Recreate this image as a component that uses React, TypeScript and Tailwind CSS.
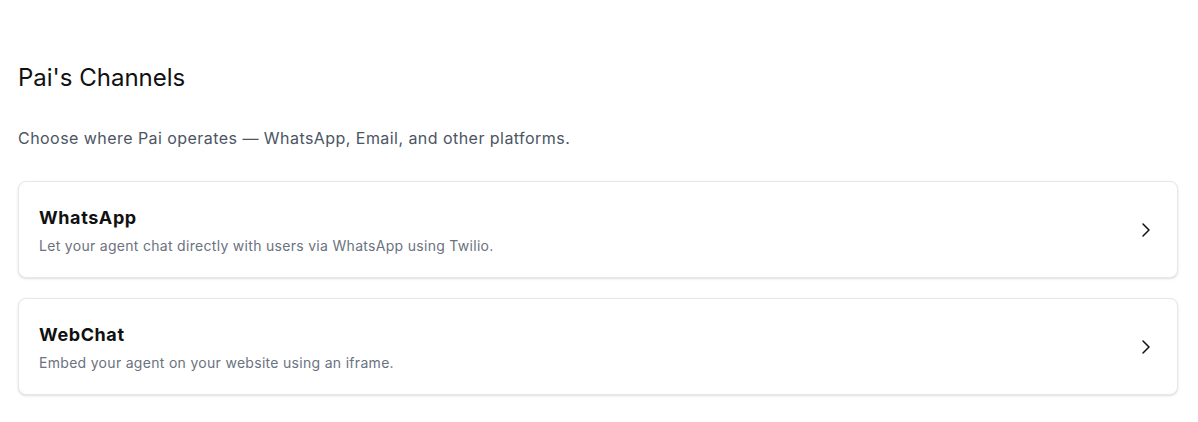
import { ChevronRight } from 'lucide-react';

const channels = [
  {
    name: 'WhatsApp',
    description: 'Let your agent chat directly with users via WhatsApp using Twilio.',
  },
  {
    name: 'WebChat',
    description: 'Embed your agent on your website using an iframe.',
  },
];

const App = () => {
  return (
    <main className="min-h-screen bg-white font-['Inter',sans-serif] pl-[18px] pr-[20px] pt-[62px]">
      <h1 className="text-2xl leading-8 text-[#111111]">Pai&apos;s Channels</h1>
      <p className="mt-8 text-base leading-6 tracking-[0.45px] text-[#4b5563]">
        Choose where Pai operates — WhatsApp, Email, and other platforms.
      </p>
      <div className="mt-[31px] flex flex-col gap-5">
        {channels.map(({ name, description }) => (
          <div
            key={name}
            className="flex items-center justify-between rounded-lg border border-gray-200 bg-white px-5 pt-[22px] pb-[21px] shadow-sm"
          >
            <div>
              <h3 className="text-lg leading-7 font-bold tracking-[0.6px] text-[#111111]">{name}</h3>
              <p className="mt-1 text-sm leading-5 tracking-[0.3px] text-[#6b7280]">{description}</p>
            </div>
            <ChevronRight className="mr-[-1px] h-6 w-6 text-[#111111]" strokeWidth={1.5} />
          </div>
        ))}
      </div>
    </main>
  );
};

export default App;
